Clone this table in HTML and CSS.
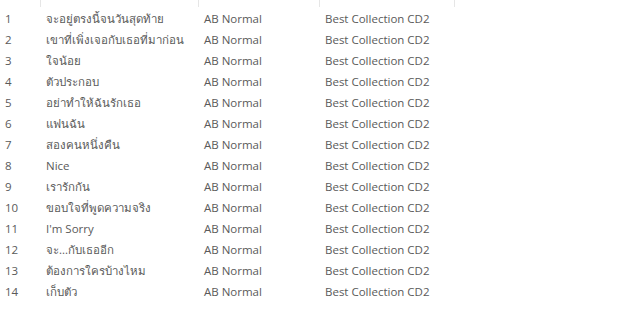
FILE: index.html
```html
<!DOCTYPE html>
<html lang="th">
<head>
<meta charset="utf-8">
<title>Track list</title>
<link rel="stylesheet" href="styles.css">
</head>
<body>
<div class="tracks">
  <div class="head"><span></span><span></span><span></span><span></span></div>
  <div class="row"><span>1</span><span>จะอยู่ตรงนี้จนวันสุดท้าย</span><span>AB Normal</span><span>Best Collection CD2</span></div>
  <div class="row"><span>2</span><span>เขาที่เพิ่งเจอกับเธอที่มาก่อน</span><span>AB Normal</span><span>Best Collection CD2</span></div>
  <div class="row"><span>3</span><span>ใจน้อย</span><span>AB Normal</span><span>Best Collection CD2</span></div>
  <div class="row"><span>4</span><span>ตัวประกอบ</span><span>AB Normal</span><span>Best Collection CD2</span></div>
  <div class="row"><span>5</span><span>อย่าทำให้ฉันรักเธอ</span><span>AB Normal</span><span>Best Collection CD2</span></div>
  <div class="row"><span>6</span><span>แฟนฉัน</span><span>AB Normal</span><span>Best Collection CD2</span></div>
  <div class="row"><span>7</span><span>สองคนหนึ่งคืน</span><span>AB Normal</span><span>Best Collection CD2</span></div>
  <div class="row"><span>8</span><span>Nice</span><span>AB Normal</span><span>Best Collection CD2</span></div>
  <div class="row"><span>9</span><span>เรารักกัน</span><span>AB Normal</span><span>Best Collection CD2</span></div>
  <div class="row"><span>10</span><span>ขอบใจที่พูดความจริง</span><span>AB Normal</span><span>Best Collection CD2</span></div>
  <div class="row"><span>11</span><span>I'm Sorry</span><span>AB Normal</span><span>Best Collection CD2</span></div>
  <div class="row"><span>12</span><span>จะ...กับเธออีก</span><span>AB Normal</span><span>Best Collection CD2</span></div>
  <div class="row"><span>13</span><span>ต้องการใครบ้างไหม</span><span>AB Normal</span><span>Best Collection CD2</span></div>
  <div class="row"><span>14</span><span>เก็บตัว</span><span>AB Normal</span><span>Best Collection CD2</span></div>
</div>
</body>
</html>
```
FILE: styles.css
```css
html, body {
  margin: 0;
  background: #ffffff;
}
.tracks {
  font-family: "Open Sans", "Noto Sans", sans-serif;
  font-size: 11.5px;
  color: #5a5a5a;
}
.head, .row {
  display: grid;
  grid-template-columns: 41px 158px 121px 135px;
}
.head {
  height: 8px;
}
.head span {
  height: 7px;
  border-right: 1px solid #e6e6e6;
}
.row {
  height: 21px;
  line-height: 21px;
  white-space: nowrap;
}
.row span {
  padding-left: 5px;
  overflow: hidden;
}
.row span:first-child {
  padding-left: 5px;
}
```
